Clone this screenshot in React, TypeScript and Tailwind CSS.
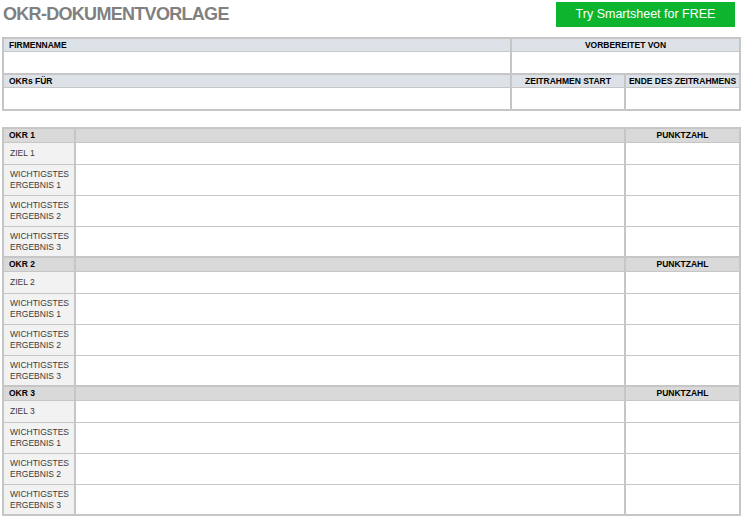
const B = 'border-[#c6c6c6]';

function TopTable() {
  return (
    <div className="mx-[2px] border-2 border-[#c6c6c6] text-[8.5px] font-bold text-black">
      <div className="flex h-[13px] border-b border-[#c6c6c6] bg-[#dde2e9] leading-[12px]">
        <div className="w-[508px] border-r-2 border-[#c6c6c6] pl-[5px]">FIRMENNAME</div>
        <div className="flex-1 text-center">VORBEREITET VON</div>
      </div>
      <div className="flex h-[23px] border-b-2 border-[#c6c6c6] bg-white">
        <div className="w-[508px] border-r-2 border-[#c6c6c6]" />
        <div className="flex-1" />
      </div>
      <div className="flex h-[13px] border-b border-[#c6c6c6] bg-[#dde2e9] leading-[12px]">
        <div className="w-[508px] border-r-2 border-[#c6c6c6] pl-[5px]">OKRs FÜR</div>
        <div className="w-[114px] border-r-2 border-[#c6c6c6] text-center">ZEITRAHMEN START</div>
        <div className="flex-1 text-center">ENDE DES ZEITRAHMENS</div>
      </div>
      <div className="flex h-[21px] bg-white">
        <div className="w-[508px] border-r-2 border-[#c6c6c6]" />
        <div className="w-[114px] border-r-2 border-[#c6c6c6]" />
        <div className="flex-1" />
      </div>
    </div>
  );
}

function Row({ label, h, last }: { label: string[]; h: string; last?: boolean }) {
  return (
    <div className={`flex ${h} ${last ? 'border-b-2' : 'border-b'} border-[#c6c6c6]`}>
      <div className="flex w-[72px] flex-col justify-center border-r-2 border-[#c6c6c6] bg-[#f2f2f2] pl-[6px] text-[8.5px] leading-[11px] text-[#3a3a3a]">
        {label.map((l) => (
          <span key={l}>{l}</span>
        ))}
      </div>
      <div className="w-[550px] border-r-2 border-[#c6c6c6] bg-white" />
      <div className="flex-1 bg-white" />
    </div>
  );
}

function Group({ n }: { n: number }) {
  return (
    <>
      <div className="flex h-[14px] border-b border-[#c6c6c6] bg-[#d9d9d9] text-[8.5px] font-bold leading-[13px] text-black">
        <div className="w-[72px] border-r-2 border-[#c6c6c6] pl-[5px]">OKR {n}</div>
        <div className="w-[550px] border-r-2 border-[#c6c6c6]" />
        <div className="flex-1 text-center">PUNKTZAHL</div>
      </div>
      <Row label={[`ZIEL ${n}`]} h="h-[22px]" />
      <Row label={['WICHTIGSTES', 'ERGEBNIS 1']} h="h-[31px]" />
      <Row label={['WICHTIGSTES', 'ERGEBNIS 2']} h="h-[31px]" />
      <Row label={['WICHTIGSTES', 'ERGEBNIS 3']} h="h-[31px]" last />
    </>
  );
}

export default function App() {
  return (
    <div
      className="h-[518px] w-[743px] overflow-hidden bg-white"
      style={{ fontFamily: '"Liberation Sans", Arial, sans-serif' }}
    >
      <div className="flex h-[37px] items-start justify-between">
        <h1 className="pl-[3px] pt-[3px] text-[18px] font-bold leading-[22px] tracking-[-0.7px] text-[#808080]">
          OKR-DOKUMENTVORLAGE
        </h1>
        <a
          href="#"
          className="mr-[8px] mt-[2px] flex h-[25px] w-[179px] items-center justify-center bg-[#0db52f] text-[12.5px] text-white"
        >
          Try Smartsheet for FREE
        </a>
      </div>
      <TopTable />
      <div className={`mx-[2px] mt-[16px] border-x-2 border-t-2 ${B}`}>
        <Group n={1} />
        <Group n={2} />
        <Group n={3} />
      </div>
    </div>
  );
}
